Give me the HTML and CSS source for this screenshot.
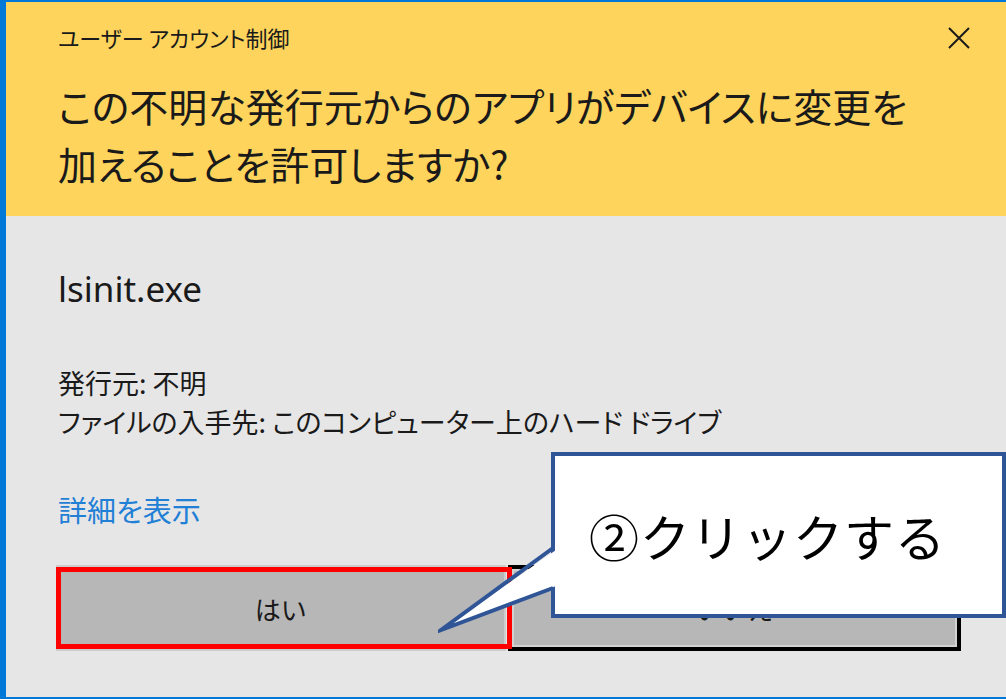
FILE: index.html
```html
<!DOCTYPE html>
<html lang="ja">
<head>
    <meta charset="UTF-8">
    <title>ユーザー アカウント制御</title>
    <link rel="stylesheet" href="styles.css">
</head>
<body>
    <div class="uac">
        <header class="uac-head">
            <div class="uac-title">ユーザー アカウント制御</div>
            <button class="uac-close" aria-label="閉じる">
                <svg width="22" height="22" viewBox="0 0 22 22">
                    <path d="M1 1 L21 21 M21 1 L1 21" stroke="#1a1a1a" stroke-width="2" fill="none"/>
                </svg>
            </button>
            <h1 class="uac-question">この不明な発行元からのアプリがデバイスに変更を<br>加えることを許可しますか?</h1>
        </header>
        <section class="uac-body">
            <div class="app-name">lsinit.exe</div>
            <div class="app-info">
                <div>発行元: 不明</div>
                <div>ファイルの入手先: このコンピューター上のハード ドライブ</div>
            </div>
            <a class="details" href="#">詳細を表示</a>
            <div class="buttons">
                <button class="btn">はい</button>
                <button class="btn btn-default">いいえ</button>
            </div>
        </section>
    </div>

    <!-- annotations drawn over the dialog -->
    <div class="mark"></div>
    <svg class="callout-tail" width="122" height="92" viewBox="0 0 122 92">
        <polygon points="118,6 3,86 118,42" fill="#fff"/>
        <polyline points="115,4 3,86 115,44" fill="none" stroke="#2f5597" stroke-width="4" stroke-miterlimit="12"/>
    </svg>
    <div class="callout">②クリックする</div>
</body>
</html>
```

FILE: styles.css
```css
html, body {
    margin: 0;
    height: 100%;
}
body {
    overflow: hidden;
    background: #e6e6e6;
    font-family: "Noto Sans CJK JP", sans-serif;
    font-feature-settings: "palt";
    color: #1a1a1a;
}
.uac {
    height: 699px;
    box-sizing: border-box;
    border-top: 2px solid #0078d7;
    border-left: 6px solid #0078d7;
    border-bottom: 2px solid #0078d7;
    background: #e6e6e6;
}
.uac-head {
    position: relative;
    height: 214px;
    box-sizing: border-box;
    padding: 20px 52px 0;
    background: #fed45c;
}
.uac-title {
    font-size: 22px;
    line-height: 30px;
}
.uac-close {
    position: absolute;
    top: 25px;
    right: 36px;
    padding: 0;
    border: none;
    background: none;
    line-height: 0;
}
.uac-question {
    margin: 24px 0 0;
    font-size: 39px;
    font-weight: normal;
    line-height: 58px;
}
.uac-body {
    padding: 51px 45px 0 52px;
}
.app-name {
    font-family: "Noto Sans", "Noto Sans CJK JP", sans-serif;
    font-size: 35px;
    line-height: 44px;
}
.app-info {
    margin-top: 52px;
    font-size: 27px;
    line-height: 39px;
}
.details {
    display: block;
    margin-top: 49px;
    font-size: 29px;
    line-height: 39px;
    color: #1f80d6;
    text-decoration: none;
}
.buttons {
    display: flex;
    gap: 2px;
    margin: 36px 0 0 -2px;
}
.btn {
    flex: 1;
    height: 86px;
    border: 2px solid #cdcdcd;
    background: #b7b7b7;
    font-family: inherit;
    font-size: 26px;
    color: #1a1a1a;
}
.btn-default {
    border: 4px solid #000;
    box-shadow: inset 0 0 0 2px #d2d2d2;
}
.mark {
    position: absolute;
    left: 56px;
    top: 567px;
    width: 456px;
    height: 82px;
    box-sizing: border-box;
    border: 5px solid #ff0000;
}
.callout {
    position: absolute;
    left: 551px;
    top: 452px;
    width: 455px;
    height: 166px;
    box-sizing: border-box;
    display: flex;
    align-items: center;
    padding-left: 34px;
    border: 4px solid #2f5597;
    background: #fff;
    font-size: 50px;
    font-feature-settings: normal;
    letter-spacing: 1px;
    color: #000;
}
.callout-tail {
    position: absolute;
    left: 438px;
    top: 544px;
    z-index: 1;
}
```
